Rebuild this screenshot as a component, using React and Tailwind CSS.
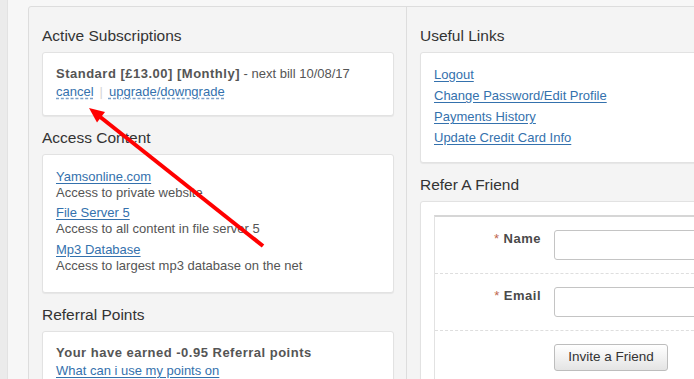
import React from "react";

const linkCls = "text-[#3471ad] underline underline-offset-2 decoration-[#3471ad]";

function Heading({ children, mb = "mb-[6px]" }) {
  return <div className={`text-[15.5px] leading-[20px] text-[#333] ${mb}`}>{children}</div>;
}

function Box({ children, className = "" }) {
  return (
    <div className={`bg-white border border-[#e2e2e2] rounded-[3px] shadow-[0_1px_1px_rgba(0,0,0,0.06)] ${className}`}>
      {children}
    </div>
  );
}

export default function App() {
  return (
    <div className="w-[694px] h-[379px] overflow-hidden relative flex bg-[#f7f7f7] font-['Liberation_Sans',Arial,sans-serif] text-[13px] text-[#555]">
      <div className="w-[8px] shrink-0 bg-[#ebebeb] border-r border-[#e2e2e2]" />
      <div className="ml-[20px] mt-[6px] flex shrink-0 self-start h-[420px] border border-[#dddddd] rounded-[3px] bg-[#f4f4f4]">
        {/* Left column */}
        <div className="w-[378px] shrink-0 border-r border-[#dddddd] pl-[13px] pt-[19px]">
          <Heading>Active Subscriptions</Heading>
          <Box className="w-[352px] pl-[13px] pt-[12px] pb-[14px] mb-[12px]">
            <div className="leading-[18px] whitespace-nowrap">
              <span className="font-bold tracking-[0.5px]">Standard [£13.00] [Monthly]</span> - next bill 10/08/17
            </div>
            <div className="leading-[18px] flex items-center">
              <span className="text-[#3471ad] underline decoration-dashed underline-offset-2 decoration-[#7aa0c8]">cancel</span>
              <span className="mx-[6px] text-[#d5d5d5]">|</span>
              <span className="text-[#3471ad] underline decoration-dashed underline-offset-2 decoration-[#7aa0c8]">upgrade/downgrade</span>
            </div>
          </Box>
          <Heading>Access Content</Heading>
          <Box className="w-[352px] pl-[13px] pt-[14px] pb-[18px] mb-[12px] leading-[16px]">
            <div className="mb-[4px]">
              <div className={linkCls}>Yamsonline.com</div>
              <div>Access to private website</div>
            </div>
            <div className="mb-[5px]">
              <div className={linkCls}>File Server 5</div>
              <div>Access to all content in file server 5</div>
            </div>
            <div>
              <div className={linkCls}>Mp3 Database</div>
              <div>Access to largest mp3 database on the net</div>
            </div>
          </Box>
          <Heading>Referral Points</Heading>
          <Box className="w-[352px] pl-[13px] pt-[12px] pb-[14px] leading-[18px]">
            <div className="font-bold tracking-[0.5px]">Your have earned -0.95 Referral points</div>
            <div className={linkCls}>What can i use my points on</div>
          </Box>
        </div>
        {/* Right column */}
        <div className="w-[320px] shrink-0 pl-[13px] pt-[19px]">
          <Heading>Useful Links</Heading>
          <Box className="w-[300px] pl-[13px] pt-[11px] pb-[14px] mb-[12px] leading-[21px]">
            <div className={linkCls}>Logout</div>
            <div className={linkCls}>Change Password/Edit Profile</div>
            <div className={linkCls}>Payments History</div>
            <div className={linkCls}>Update Credit Card Info</div>
          </Box>
          <Heading>Refer A Friend</Heading>
          <Box className="w-[300px] pl-[13px] pt-[13px] pb-[20px]">
            <div className="border-t-2 border-l border-[#d6d6d6] border-l-[#e2e2e2]">
              <div className="flex py-[13px] border-b border-dashed border-[#dedede]">
                <div className="w-[106px] shrink-0 text-right font-bold tracking-[0.5px] leading-[18px] text-[#4a4a4a]">
                  <span className="text-[#c0674e] font-normal">*</span> Name
                </div>
                <div className="ml-[13px] w-[200px] shrink-0 h-[30px] border border-[#c4c4c4] rounded-[3px] bg-white" />
              </div>
              <div className="flex py-[13px] border-b border-dashed border-[#dedede]">
                <div className="w-[106px] shrink-0 text-right font-bold tracking-[0.5px] leading-[18px] text-[#4a4a4a]">
                  <span className="text-[#c0674e] font-normal">*</span> Email
                </div>
                <div className="ml-[13px] w-[200px] shrink-0 h-[30px] border border-[#c4c4c4] rounded-[3px] bg-white" />
              </div>
              <div className="flex py-[13px]">
                <div className="w-[106px] shrink-0" />
                <div className="ml-[13px] w-[114px] shrink-0 h-[27px] flex items-center justify-center border border-[#bdbdbd] rounded-[3px] bg-gradient-to-b from-white to-[#e4e4e4] text-[#333] text-[13.5px]">
                  Invite a Friend
                </div>
              </div>
            </div>
          </Box>
        </div>
      </div>
      <svg className="absolute left-0 top-0 pointer-events-none" width="694" height="379" viewBox="0 0 694 379">
        <line x1="263" y1="246" x2="99" y2="116" stroke="#ff0000" strokeWidth="4" />
        <polygon points="89,108 97,122.5 105,112" fill="#ff0000" />
      </svg>
    </div>
  );
}
